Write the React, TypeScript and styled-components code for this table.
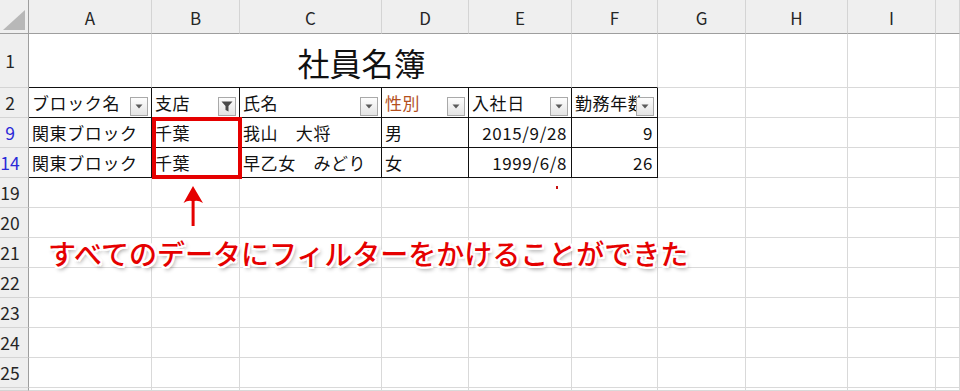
import React from 'react'
import styled, { createGlobalStyle } from 'styled-components'

const GlobalStyle = createGlobalStyle`
  html, body {
    margin: 0;
    padding: 0;
    background: #fff;
    overflow: hidden;
  }
  body {
    font-family: "Noto Sans CJK JP", "Noto Sans", sans-serif;
  }
`

const GRID = '#d9d9d9'
const HEAD_LINE = '#9e9e9e'
const INK = '#111'
const RED = '#e50000'

// the last column only peeks in at the right edge, so it carries no letter
const COLS = [
  { key: 'A', w: 123 },
  { key: 'B', w: 88 },
  { key: 'C', w: 142 },
  { key: 'D', w: 87 },
  { key: 'E', w: 103 },
  { key: 'F', w: 86 },
  { key: 'G', w: 88 },
  { key: 'H', w: 102 },
  { key: 'I', w: 88 },
  { key: '', w: 24 }
]

const ROWS = [
  { label: '1', h: 54 },
  { label: '2', h: 30 },
  { label: '9', h: 30, hit: true },
  { label: '14', h: 30, hit: true },
  { label: '19', h: 30 },
  { label: '20', h: 30 },
  { label: '21', h: 30 },
  { label: '22', h: 30 },
  { label: '23', h: 30 },
  { label: '24', h: 30 },
  { label: '25', h: 30 },
  { label: '', h: 3 }
]

type Field = { text: string; align?: 'left' | 'right' }

const HEADERS: { text: string; filtered?: boolean; tone?: string }[] = [
  { text: 'ブロック名' },
  { text: '支店', filtered: true },
  { text: '氏名' },
  { text: '性別', tone: '#b4501e' },
  { text: '入社日' },
  { text: '勤務年数' }
]

const RECORDS: Field[][] = [
  [
    { text: '関東ブロック' },
    { text: '千葉' },
    { text: '我山　大将' },
    { text: '男' },
    { text: '2015/9/28', align: 'right' },
    { text: '9', align: 'right' }
  ],
  [
    { text: '関東ブロック' },
    { text: '千葉' },
    { text: '早乙女　みどり' },
    { text: '女' },
    { text: '1999/6/8', align: 'right' },
    { text: '26', align: 'right' }
  ]
]

const Viewport = styled.div`
  width: 960px;
  height: 391px;
  overflow: hidden;
`

const Sheet = styled.div`
  position: relative;
  display: grid;
  grid-template-columns: 29px ${COLS.map(c => `${c.w}px`).join(' ')};
  grid-template-rows: 34px ${ROWS.map(r => `${r.h}px`).join(' ')};
  width: max-content;
`

const Corner = styled.div`
  position: relative;
  background: #efefef;
  border-right: 1px solid ${HEAD_LINE};
  border-bottom: 1px solid ${HEAD_LINE};
  box-sizing: border-box;

  &::after {
    content: '';
    position: absolute;
    left: 3px;
    top: 10px;
    width: 22px;
    height: 20px;
    background: #b8b8b8;
    clip-path: polygon(100% 0, 100% 100%, 0 100%);
  }
`

const ColHead = styled.div`
  display: flex;
  align-items: center;
  justify-content: center;
  padding-top: 2px;
  background: #efefef;
  border-right: 1px solid #d4d4d4;
  border-bottom: 1px solid ${HEAD_LINE};
  box-sizing: border-box;
  font-size: 17px;
  color: #262626;
`

const RowHead = styled.div<{ $hit?: boolean }>`
  display: flex;
  align-items: center;
  justify-content: center;
  padding-right: 8px;
  background: #efefef;
  border-right: 1px solid ${HEAD_LINE};
  border-bottom: 1px solid #d4d4d4;
  box-sizing: border-box;
  overflow: hidden;
  font-size: 17.5px;
  color: ${p => (p.$hit ? '#2a2ad8' : '#262626')};
`

const Cell = styled.div<{
  $right?: string
  $bottom?: string
  $align?: 'left' | 'right'
  $span?: number
  $tone?: string
}>`
  position: relative;
  display: flex;
  align-items: center;
  justify-content: ${p => (p.$align === 'right' ? 'flex-end' : 'flex-start')};
  padding: 0 ${p => (p.$align === 'right' ? '4px' : '0')} 0 ${p => (p.$align === 'right' ? '0' : '3px')};
  grid-column: span ${p => p.$span ?? 1};
  border-right: 1px solid ${p => p.$right ?? GRID};
  border-bottom: 1px solid ${p => p.$bottom ?? GRID};
  box-sizing: border-box;
  overflow: hidden;
  white-space: nowrap;
  font-size: 17px;
  letter-spacing: 0.6px;
  color: ${p => p.$tone ?? INK};
`

const Title = styled(Cell)`
  justify-content: center;
  padding: 2px 0 0;
  font-size: 32px;
  letter-spacing: 0;
`

const FilterButton = styled.span`
  position: absolute;
  right: 3px;
  bottom: 1px;
  width: 18px;
  height: 19px;
  display: flex;
  align-items: center;
  justify-content: center;
  box-sizing: border-box;
  border: 1px solid #a9a9a9;
  background: linear-gradient(#fdfdfd, #e4e4e4);
`

const DropGlyph = () => (
  <svg width="8" height="5" viewBox="0 0 8 5">
    <path d="M0.5 0.5 H7.5 L4 4.5 Z" fill="#5a5a5a" />
  </svg>
)

const FunnelGlyph = () => (
  <svg width="12" height="11" viewBox="0 0 12 11">
    <path d="M0.5 0.5 H11.5 L7.5 5 V10.5 L4.5 9 V5 Z" fill="#4a4a4a" />
  </svg>
)

const Highlight = styled.div`
  position: absolute;
  left: 152px;
  top: 117px;
  width: 90px;
  height: 62px;
  box-sizing: border-box;
  border: 4px solid ${RED};
  pointer-events: none;
`

const Pointer = styled.svg`
  position: absolute;
  left: 182px;
  top: 184px;
`

const Speck = styled.span`
  position: absolute;
  left: 556px;
  top: 186px;
  width: 2px;
  height: 3px;
  background: #c81010;
`

const Caption = styled.div`
  position: absolute;
  left: 48px;
  top: 237px;
  font-size: 28px;
  line-height: 32px;
  font-weight: 500;
  color: ${RED};
  white-space: nowrap;
  text-shadow:
    -2px -2px 0 #fff, 2px -2px 0 #fff, -2px 2px 0 #fff, 2px 2px 0 #fff,
    0 -2px 0 #fff, 0 2px 0 #fff, -2px 0 0 #fff, 2px 0 0 #fff,
    2px 3px 4px rgba(0, 0, 0, 0.45);
`

const EmptyCells = ({ from, bottom }: { from: number; bottom?: string }) => (
  <>
    {COLS.slice(from).map((c, i) => (
      <Cell key={i} $bottom={bottom} />
    ))}
  </>
)

export default function App() {
  return (
    <>
      <GlobalStyle />
      <Viewport>
        <Sheet>
          <Corner />
          {COLS.map((c, i) => (
            <ColHead key={i}>{c.key}</ColHead>
          ))}

          {/* row 1: title merged over B:E */}
          <RowHead>{ROWS[0].label}</RowHead>
          <Cell $bottom={INK} />
          <Title $span={4} $bottom={INK}>社員名簿</Title>
          <Cell $bottom={INK} />
          <EmptyCells from={6} />

          {/* row 2: table header with filter buttons */}
          <RowHead>{ROWS[1].label}</RowHead>
          {HEADERS.map(h => (
            <Cell key={h.text} $right={INK} $bottom={INK} $tone={h.tone}>
              {h.text}
              <FilterButton>{h.filtered ? <FunnelGlyph /> : <DropGlyph />}</FilterButton>
            </Cell>
          ))}
          <EmptyCells from={6} />

          {RECORDS.map((rec, i) => (
            <React.Fragment key={i}>
              <RowHead $hit>{ROWS[i + 2].label}</RowHead>
              {rec.map((f, j) => (
                <Cell key={j} $right={INK} $bottom={INK} $align={f.align}>
                  {f.text}
                </Cell>
              ))}
              <EmptyCells from={6} />
            </React.Fragment>
          ))}

          {ROWS.slice(4).map((r, i) => (
            <React.Fragment key={i}>
              <RowHead>{r.label}</RowHead>
              <EmptyCells from={0} />
            </React.Fragment>
          ))}

          <Highlight />
          <Pointer width="24" height="44" viewBox="0 0 24 44">
            <path
              d="M11 2 L21 19 Q16 16 12.6 17 L12.6 42 L9.6 42 L9.6 17 Q6 16 1.5 19 Z"
              fill={RED}
            />
          </Pointer>
          <Speck />
          <Caption>すべてのデータにフィルターをかけることができた</Caption>
        </Sheet>
      </Viewport>
    </>
  )
}
